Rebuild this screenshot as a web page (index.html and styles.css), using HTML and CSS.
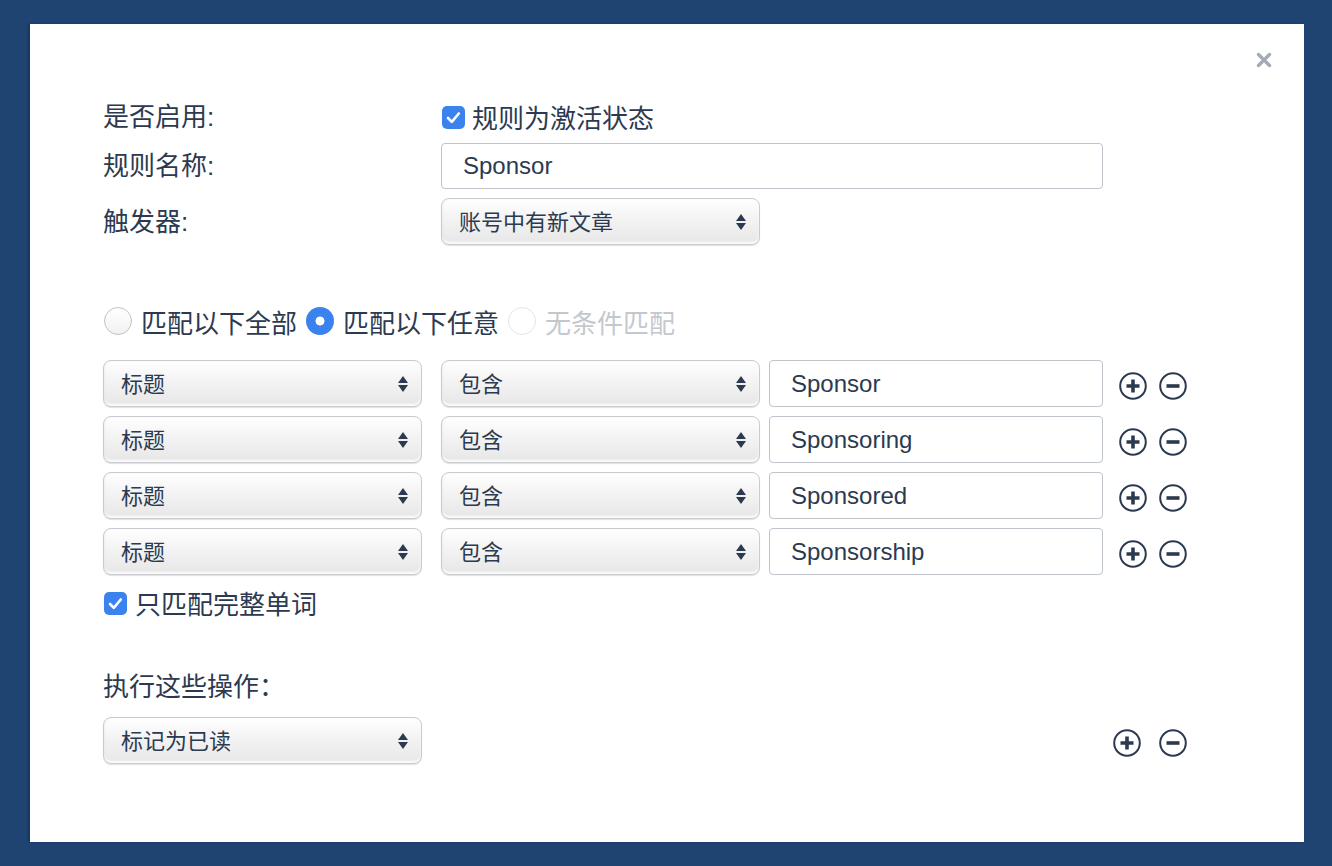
FILE: index.html
```html
<!DOCTYPE html>
<html lang="zh-CN">
<head>
<meta charset="utf-8">
<title>规则</title>
<link rel="stylesheet" href="styles.css">
</head>
<body>
<div class="modal">
  <button class="close" aria-label="关闭">
    <svg viewBox="0 0 16 16" width="16" height="16"><path d="M2.5 2.5 L13.5 13.5 M13.5 2.5 L2.5 13.5" stroke="#a4abb6" stroke-width="3.4" stroke-linecap="round"/></svg>
  </button>
  <div class="form">
    <div class="field field-enable">
      <div class="label">是否启用:</div>
      <div class="check">
        <span class="box"><svg viewBox="0 0 23 23" width="23" height="23"><path d="M6 12 L9.8 15.8 L16.8 7.5" fill="none" stroke="#fff" stroke-width="2.6" stroke-linecap="round" stroke-linejoin="round"/></svg></span>
        <span>规则为激活状态</span>
      </div>
    </div>
    <div class="field field-name">
      <div class="label">规则名称:</div>
      <div class="input input-wide">Sponsor</div>
    </div>
    <div class="field field-trigger">
      <div class="label">触发器:</div>
      <div class="select">账号中有新文章<span class="arrows"></span></div>
    </div>

    <div class="radios">
      <div class="radio-item"><span class="radio"></span><span>匹配以下全部</span></div>
      <div class="radio-item"><span class="radio checked"></span><span>匹配以下任意</span></div>
      <div class="radio-item disabled"><span class="radio"></span><span>无条件匹配</span></div>
    </div>

    <div class="conditions">
      <div class="cond-row">
        <div class="select">标题<span class="arrows"></span></div>
        <div class="select op">包含<span class="arrows"></span></div>
        <div class="input value">Sponsor</div>
        <div class="icons">
          <span class="icon"><svg viewBox="0 0 28 28" width="28" height="28"><circle cx="14" cy="14" r="12.8" fill="none" stroke="#2b3a50" stroke-width="2"/><path d="M14 7.5 V20.5 M7.5 14 H20.5" stroke="#2b3a50" stroke-width="3.6"/></svg></span>
          <span class="icon"><svg viewBox="0 0 28 28" width="28" height="28"><circle cx="14" cy="14" r="12.8" fill="none" stroke="#2b3a50" stroke-width="2"/><path d="M7.5 14 H20.5" stroke="#2b3a50" stroke-width="3.6"/></svg></span>
        </div>
      </div>
      <div class="cond-row">
        <div class="select">标题<span class="arrows"></span></div>
        <div class="select op">包含<span class="arrows"></span></div>
        <div class="input value">Sponsoring</div>
        <div class="icons">
          <span class="icon"><svg viewBox="0 0 28 28" width="28" height="28"><circle cx="14" cy="14" r="12.8" fill="none" stroke="#2b3a50" stroke-width="2"/><path d="M14 7.5 V20.5 M7.5 14 H20.5" stroke="#2b3a50" stroke-width="3.6"/></svg></span>
          <span class="icon"><svg viewBox="0 0 28 28" width="28" height="28"><circle cx="14" cy="14" r="12.8" fill="none" stroke="#2b3a50" stroke-width="2"/><path d="M7.5 14 H20.5" stroke="#2b3a50" stroke-width="3.6"/></svg></span>
        </div>
      </div>
      <div class="cond-row">
        <div class="select">标题<span class="arrows"></span></div>
        <div class="select op">包含<span class="arrows"></span></div>
        <div class="input value">Sponsored</div>
        <div class="icons">
          <span class="icon"><svg viewBox="0 0 28 28" width="28" height="28"><circle cx="14" cy="14" r="12.8" fill="none" stroke="#2b3a50" stroke-width="2"/><path d="M14 7.5 V20.5 M7.5 14 H20.5" stroke="#2b3a50" stroke-width="3.6"/></svg></span>
          <span class="icon"><svg viewBox="0 0 28 28" width="28" height="28"><circle cx="14" cy="14" r="12.8" fill="none" stroke="#2b3a50" stroke-width="2"/><path d="M7.5 14 H20.5" stroke="#2b3a50" stroke-width="3.6"/></svg></span>
        </div>
      </div>
      <div class="cond-row">
        <div class="select">标题<span class="arrows"></span></div>
        <div class="select op">包含<span class="arrows"></span></div>
        <div class="input value">Sponsorship</div>
        <div class="icons">
          <span class="icon"><svg viewBox="0 0 28 28" width="28" height="28"><circle cx="14" cy="14" r="12.8" fill="none" stroke="#2b3a50" stroke-width="2"/><path d="M14 7.5 V20.5 M7.5 14 H20.5" stroke="#2b3a50" stroke-width="3.6"/></svg></span>
          <span class="icon"><svg viewBox="0 0 28 28" width="28" height="28"><circle cx="14" cy="14" r="12.8" fill="none" stroke="#2b3a50" stroke-width="2"/><path d="M7.5 14 H20.5" stroke="#2b3a50" stroke-width="3.6"/></svg></span>
        </div>
      </div>
    </div>

    <div class="check whole">
      <span class="box"><svg viewBox="0 0 23 23" width="23" height="23"><path d="M6 12 L9.8 15.8 L16.8 7.5" fill="none" stroke="#fff" stroke-width="2.6" stroke-linecap="round" stroke-linejoin="round"/></svg></span>
      <span>只匹配完整单词</span>
    </div>

    <div class="section-title">执行这些操作：</div>

    <div class="action-row">
      <div class="select">标记为已读<span class="arrows"></span></div>
      <div class="icons icons-action">
        <span class="icon"><svg viewBox="0 0 28 28" width="28" height="28"><circle cx="14" cy="14" r="12.8" fill="none" stroke="#2b3a50" stroke-width="2"/><path d="M14 7.5 V20.5 M7.5 14 H20.5" stroke="#2b3a50" stroke-width="3.6"/></svg></span>
        <span class="icon"><svg viewBox="0 0 28 28" width="28" height="28"><circle cx="14" cy="14" r="12.8" fill="none" stroke="#2b3a50" stroke-width="2"/><path d="M7.5 14 H20.5" stroke="#2b3a50" stroke-width="3.6"/></svg></span>
      </div>
    </div>
  </div>
</div>
</body>
</html>
```
FILE: styles.css
```css
html, body {
  margin: 0;
  padding: 0;
}
body {
  background: #1f4472;
  width: 1332px;
  height: 866px;
  padding: 24px 28px 24px 30px;
  box-sizing: border-box;
  font-family: "Liberation Sans", "Noto Sans CJK SC", sans-serif;
  color: #2b3a50;
}
.modal {
  position: relative;
  width: 1274px;
  height: 818px;
  background: #fff;
  box-sizing: border-box;
  padding: 75px 0 0 73px;
  box-shadow: -2px 0 2px rgba(10, 30, 60, 0.35);
}
.close {
  position: absolute;
  top: 28px;
  right: 32px;
  width: 16px;
  height: 16px;
  padding: 0;
  border: 0;
  background: none;
  display: flex;
}
.form {
  width: 1084px;
  display: flex;
  flex-direction: column;
}
.field {
  display: flex;
  align-items: center;
}
.label {
  width: 338px;
  flex: none;
  font-size: 26px;
  line-height: 36px;
}
.field-enable {
  height: 36px;
}
.field-name {
  margin-top: 8px;
}
.field-trigger {
  margin-top: 9px;
}
.check {
  display: flex;
  align-items: center;
  font-size: 26px;
  line-height: 36px;
  font-family: "Noto Sans CJK SC", sans-serif;
}
.check .box {
  width: 23px;
  height: 23px;
  border-radius: 5px;
  background: #3a83ee;
  display: flex;
  margin: 0 7px 0 1px;
  flex: none;
}
.input {
  box-sizing: border-box;
  height: 46px;
  border: 1.5px solid #bfc3ca;
  border-radius: 4px;
  padding-left: 21px;
  font-size: 24px;
  line-height: 43px;
  color: #2b3a50;
  background: #fff;
}
.input-wide {
  width: 662px;
}
.select {
  position: relative;
  box-sizing: border-box;
  width: 319px;
  height: 47px;
  border: 1px solid #c9cbce;
  border-radius: 8px;
  background: linear-gradient(#ffffff 0%, #f3f3f3 45%, #e7e7e7 100%);
  box-shadow: inset 0 -2px 2px rgba(255,255,255,0.9), 0 1px 1px rgba(0,0,0,0.12), inset 1px 0 2px rgba(0,0,0,0.05);
  padding-left: 17px;
  font-family: "Noto Sans CJK SC", sans-serif;
  font-size: 22px;
  line-height: 42px;
  color: #2b3a50;
  flex: none;
}
.arrows {
  position: absolute;
  right: 13px;
  top: 50%;
  width: 10px;
  height: 18px;
  margin-top: -9px;
}
.arrows::before, .arrows::after {
  content: "";
  position: absolute;
  left: 0;
  border-left: 5px solid transparent;
  border-right: 5px solid transparent;
}
.arrows::before {
  top: 1px;
  border-bottom: 7px solid #2b3a50;
}
.arrows::after {
  bottom: 1px;
  border-top: 7px solid #2b3a50;
}
.radios {
  display: flex;
  align-items: center;
  margin-top: 62px;
  height: 28px;
  margin-left: 1px;
  font-family: "Noto Sans CJK SC", sans-serif;
  font-size: 26px;
}
.radio-item {
  display: flex;
  align-items: center;
  margin-right: 9px;
}
.radio-item.disabled {
  color: #c4c8ce;
}
.radio {
  box-sizing: border-box;
  width: 28px;
  height: 28px;
  border-radius: 50%;
  border: 1px solid #c2c2c2;
  background: linear-gradient(#ffffff, #f2f2f2);
  margin-right: 9px;
  flex: none;
}
.radio.checked {
  border: 0;
  background: radial-gradient(circle, #ffffff 0 4.2px, #3a83ee 4.8px);
}
.radio-item.disabled .radio {
  border-color: #e3e4e6;
  background: #fff;
}
.conditions {
  margin-top: 25px;
  display: flex;
  flex-direction: column;
  gap: 9px;
}
.cond-row {
  display: flex;
  align-items: center;
}
.cond-row .op {
  margin-left: 19px;
}
.value {
  width: 334px;
  margin-left: 9px;
  height: 47px;
  line-height: 45px;
}
.icons {
  display: flex;
  gap: 12px;
  margin-left: 16px;
  padding-top: 5px;
}
.icon {
  display: flex;
  width: 28px;
  height: 28px;
}
.whole {
  margin-top: 14px;
  height: 28px;
}
.whole .box {
  margin-right: 8px;
}
.section-title {
  margin-top: 50px;
  font-family: "Noto Sans CJK SC", sans-serif;
  font-size: 26px;
  line-height: 36px;
}
.action-row {
  margin-top: 14px;
  display: flex;
  align-items: center;
  justify-content: space-between;
}
.icons-action {
  gap: 18px;
  margin-left: 0;
}
```
